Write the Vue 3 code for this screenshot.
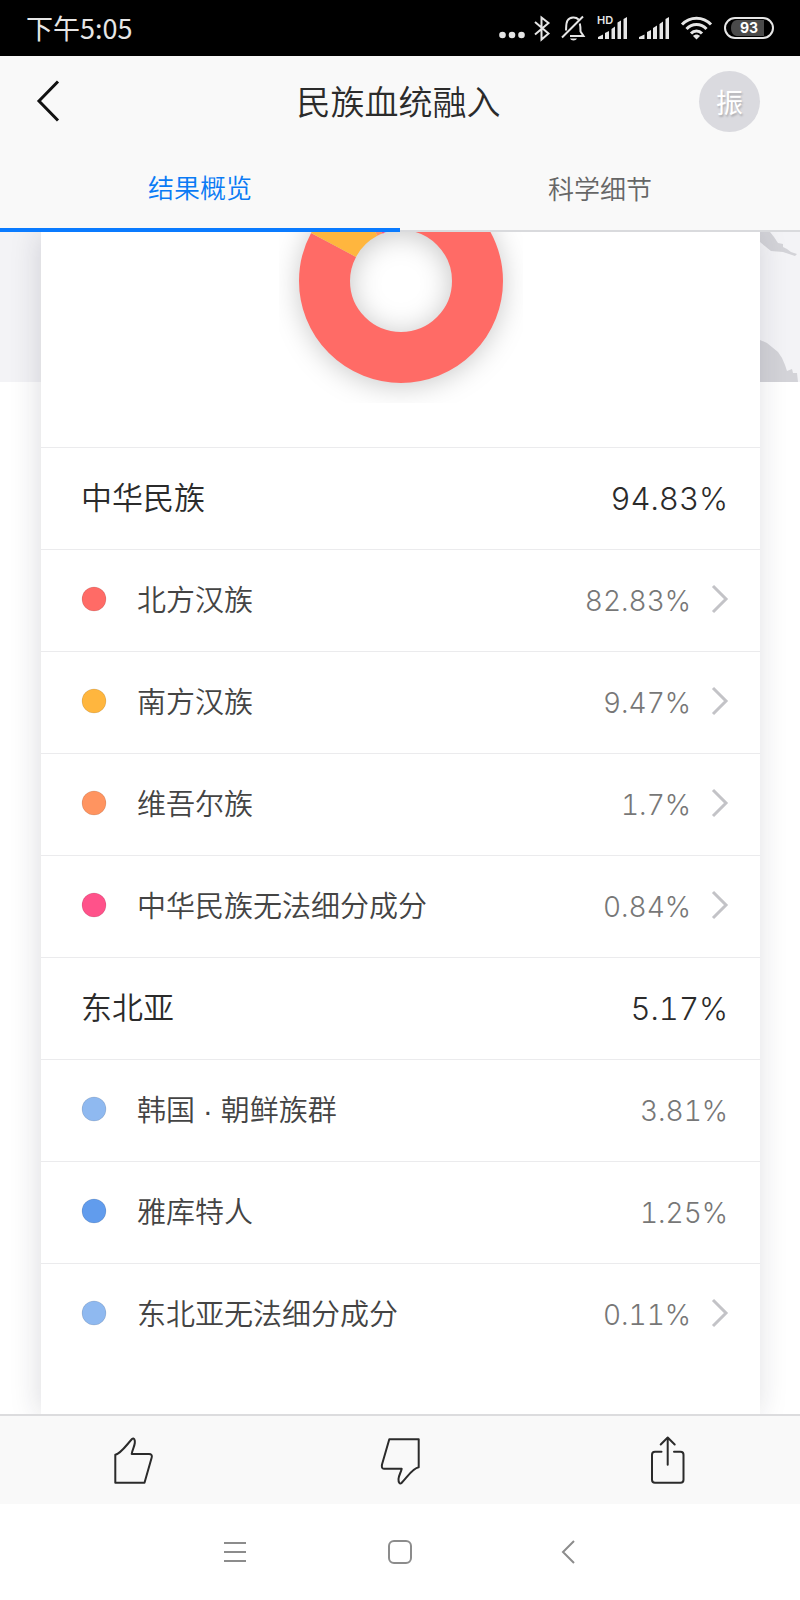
<script setup>
import { ref, computed } from 'vue'

const tabs = ['结果概览', '科学细节']
const activeTab = ref(0)

const groups = [
  {
    name: '中华民族',
    value: 94.83,
    items: [
      { name: '北方汉族', value: 82.83, color: '#ff6b66', detail: true },
      { name: '南方汉族', value: 9.47, color: '#ffb63e', detail: true },
      { name: '维吾尔族', value: 1.7, color: '#ff9460', detail: true },
      { name: '中华民族无法细分成分', value: 0.84, color: '#ff528a', detail: true }
    ]
  },
  {
    name: '东北亚',
    value: 5.17,
    items: [
      { name: '韩国 · 朝鲜族群', value: 3.81, color: '#8fb9f0', detail: false },
      { name: '雅库特人', value: 1.25, color: '#619ced', detail: false },
      { name: '东北亚无法细分成分', value: 0.11, color: '#8fb9f0', detail: true }
    ]
  }
]

// Each slice is a dash on a ring whose path length is normalised to 100.
const slices = computed(() => {
  let start = 0
  return groups.flatMap((g) => g.items).map((item) => {
    const slice = { color: item.color, dash: `${item.value} ${100 - item.value}`, offset: -start }
    start += item.value
    return slice
  })
})
</script>

<template>
  <div class="page">
    <div class="status">
      <span class="time">下午5:05</span>
      <div class="status-icons">
        <div class="status-pair">
          <svg width="26" height="26" viewBox="0 0 26 26" fill="#e6e6e6">
            <circle cx="3.5" cy="20" r="3.3" /><circle cx="13" cy="20" r="3.3" /><circle cx="22.5" cy="20" r="3.3" />
          </svg>
          <svg width="16" height="26" viewBox="0 0 16 26" fill="none" stroke="#e6e6e6" stroke-width="2">
            <path d="M2 7 L15.500 18.500 L8.500 24.500 V2.500 L15.500 8 L2 19.500" />
          </svg>
        </div>
        <svg width="24" height="26" viewBox="0 0 24 26" fill="none" stroke="#e6e6e6" stroke-width="2">
          <path d="M17.500 4.500 C15 1.800 9 1.800 6.500 5.500 C5 8 5.300 11 5 15.500 M9 21 H22.500 L19.500 16.500 C19.500 12 19.500 11 18.800 8.500 M22 1.500 L1 22.500" />
          <path d="M9 23.500 H16 C15 26 10 26 9 23.500 Z" fill="#e6e6e6" stroke="none" />
        </svg>
        <svg width="30" height="26" viewBox="0 0 30 26" fill="#e6e6e6">
          <text x="0" y="9" class="hd">HD</text>
          <path d="M1 24 V22 L6 19.500 V24 Z M8 24 V18 L12 16 V24 Z M14.500 24 V14 L18 11.500 V24 Z M20.500 24 V7.500 L24 5.500 V24 Z M26.500 24 V4 L30 2 V24 Z" />
        </svg>
        <svg width="30" height="26" viewBox="0 0 30 26" fill="#e6e6e6">
          <path d="M0 24 V22 L5.500 19.500 V24 Z M8 24 V17 L12 15 V24 Z M14 24 V13 L18 10.500 V24 Z M20.500 24 V9 L24 6.500 V24 Z M26.500 24 V4 L30 2 V24 Z" />
        </svg>
        <svg width="31" height="26" viewBox="0 0 31 26" fill="none" stroke="#e6e6e6" stroke-width="3">
          <path d="M1 9.500 C9 1 22 1 30 9.500 M5.500 14 C11 8 20 8 25.500 14 M10 18.500 C13 15.200 18 15.200 21 18.500" />
          <path d="M15.500 24.500 L12 21 C14 19 17 19 19 21 Z" fill="#e6e6e6" stroke="none" />
        </svg>
        <svg width="50" height="26" viewBox="0 0 50 26">
          <rect x="1" y="3" width="48" height="20" rx="10" fill="#000" stroke="#e6e6e6" stroke-width="2" />
          <path d="M13 5 H40 V21 H13 C5 21 5 5 13 5 Z" fill="#4a4a4a" />
          <text x="25" y="18" text-anchor="middle" class="battery">93</text>
        </svg>
      </div>
    </div>

    <header class="header">
      <button class="icon-button" aria-label="返回">
        <svg width="24" height="42" viewBox="0 0 24 42" fill="none" stroke="#111" stroke-width="3">
          <path d="M21 1.500 L2 21 L21 40.500" />
        </svg>
      </button>
      <h1>民族血统融入</h1>
      <button class="avatar">振</button>
    </header>

    <nav class="tabs">
      <button
        v-for="(tab, i) in tabs"
        :key="tab"
        :class="['tab', { active: activeTab === i }]"
        @click="activeTab = i"
      >{{ tab }}</button>
    </nav>

    <main class="content">
      <div class="backdrop">
        <svg width="40" height="150" viewBox="0 0 40 150" fill="#d3d3d8">
          <path d="M0 0 H10 L14 5 L18 11 L23 12 L23 15 L27 17 L31 20 L37 22 L35 24 L23 20 L11 19 L0 10 Z" />
          <path d="M0 108 L7 111 L18 120 L22 126 L25 133 L27 139 L32 137 L33 141 L37 141 L38 150 H0 Z" />
        </svg>
      </div>
      <section class="card">
        <div class="chart">
          <svg width="244" height="244" viewBox="-122 -122 244 244">
            <defs>
              <filter id="ring-shadow" x="-30%" y="-30%" width="160%" height="160%">
                <feGaussianBlur stdDeviation="14" />
              </filter>
            </defs>
            <circle r="76" cy="3" fill="none" stroke="#000" stroke-opacity="0.22" stroke-width="51" filter="url(#ring-shadow)" />
            <circle
              v-for="(s, i) in slices"
              :key="i"
              r="76.5"
              fill="none"
              stroke-width="51"
              pathLength="100"
              transform="rotate(-90)"
              :stroke="s.color"
              :stroke-dasharray="s.dash"
              :stroke-dashoffset="s.offset"
            />
          </svg>
        </div>
        <div v-for="g in groups" :key="g.name" class="group">
          <h2 class="row">
            <span class="name">{{ g.name }}</span>
            <span class="value">{{ g.value }}%</span>
          </h2>
          <component
            :is="item.detail ? 'button' : 'div'"
            v-for="item in g.items"
            :key="item.name"
            class="row item"
          >
            <svg class="dot" width="26" height="26" viewBox="0 0 26 26">
              <circle cx="13" cy="13" r="12" :fill="item.color" stroke="#000" stroke-opacity="0.1" />
            </svg>
            <span class="name">{{ item.name }}</span>
            <span class="value">{{ item.value }}%</span>
            <svg v-if="item.detail" class="chevron" width="16" height="28" viewBox="0 0 16 28" fill="none" stroke="#c3c3c7" stroke-width="3">
              <path d="M1 1 L14 14 L1 27" />
            </svg>
          </component>
        </div>
      </section>
    </main>

    <footer class="actions">
      <button class="action" aria-label="赞">
        <svg width="40" height="48" viewBox="0 0 40 48">
          <path d="M2.300 18.700 C8 17.500 13 9.500 19 3 C21 1.500 22.200 4 21.800 7 C21.300 11 19.500 13 18.700 18 H36 C38.500 18 39.300 19.500 38.700 21.500 L31.500 46.700 H2.300 Z" />
        </svg>
      </button>
      <button class="action" aria-label="踩">
        <svg width="40" height="48" viewBox="0 0 40 48">
          <path d="M38.700 31.300 C33 32 28 40 21.500 47 C20 48.500 18.300 46.500 18.500 43 C18.800 39 20.800 37 21.700 32.700 H4 C2 32.700 1.500 31 2 28.500 L9.300 3.300 H38.700 Z" />
        </svg>
      </button>
      <button class="action" aria-label="分享">
        <svg width="40" height="48" viewBox="0 0 40 48">
          <path d="M14.500 15.700 H8 Q5 15.700 5 18.700 V43.700 Q5 46.700 8 46.700 H33.500 Q36.500 46.700 36.500 43.700 V18.700 Q36.500 15.700 33.500 15.700 H27 M20.700 28.700 V1.500 M13.700 8.500 L20.700 1.500 L27.700 8.500" />
        </svg>
      </button>
    </footer>

    <nav class="system">
      <button aria-label="菜单">
        <svg width="24" height="24" viewBox="0 0 24 24"><path d="M2 3 H24 M2 12 H24 M2 21 H24" /></svg>
      </button>
      <button aria-label="主屏幕">
        <svg width="24" height="24" viewBox="0 0 24 24"><rect x="1" y="1" width="22" height="22" rx="5" /></svg>
      </button>
      <button aria-label="返回">
        <svg width="24" height="24" viewBox="0 0 24 24"><path d="M20 1 L9 12 L20 23" /></svg>
      </button>
    </nav>
  </div>
</template>

<style>
body {
  margin: 0;
  background: #fff;
}
</style>

<style scoped>
.page {
  display: flex;
  flex-direction: column;
  min-height: 100vh;
  font-family: "Noto Sans CJK SC", sans-serif;
  font-weight: 350;
  color: #2b2b2b;
}

button {
  padding: 0;
  border: 0;
  background: none;
  font: inherit;
  color: inherit;
  cursor: pointer;
}

svg {
  display: block;
  flex: none;
  overflow: visible;
}

.status {
  display: flex;
  align-items: center;
  justify-content: space-between;
  height: 56px;
  padding: 0 26px;
  background: #000;
  color: #e6e6e6;
}

.time {
  font-size: 27px;
  font-weight: 400;
  line-height: 40px;
}

.status-icons {
  display: flex;
  gap: 12px;
}

.status-pair {
  display: flex;
  gap: 8px;
}

.hd {
  font: 600 11px Inter, sans-serif;
}

.battery {
  font: 700 14px Inter, sans-serif;
  fill: #fff;
}

.header {
  display: grid;
  grid-template-columns: 61px 1fr 61px;
  align-items: center;
  height: 90px;
  padding: 0 40px 0 37px;
  background: #f9f9f9;
}

.icon-button {
  justify-self: start;
}

h1 {
  margin: 0;
  font-size: 34px;
  font-weight: inherit;
  line-height: 48px;
  text-align: center;
}

.avatar {
  height: 61px;
  border-radius: 50%;
  background: #dadadf;
  color: #fff;
  font-size: 27px;
  font-weight: 400;
  line-height: 61px;
  text-shadow: 1px 2px 2px rgba(0, 0, 0, 0.2);
}

.tabs {
  display: grid;
  grid-template-columns: 1fr 1fr;
  height: 86px;
  background: #f9f9f9;
}

.tab {
  box-sizing: border-box;
  border-bottom: 2px solid #d9dadd;
  font-size: 26px;
  line-height: 80px;
  color: #666;
}

.tab.active {
  border-bottom: 4px solid #0a7bff;
  color: #0a7bf5;
}

.content {
  display: grid;
  flex: 1;
  overflow: hidden;
}

.backdrop {
  grid-area: 1 / 1;
  align-self: start;
  display: flex;
  justify-content: flex-end;
  background: #f3f3f6;
}

.card {
  grid-area: 1 / 1;
  margin: 0 40px 0 41px;
  padding-bottom: 48px;
  background: #fff;
  box-shadow: -2px 0 28px rgba(30, 30, 50, 0.15);
}

.chart {
  display: flex;
  align-items: flex-end;
  justify-content: center;
  height: 171px;
  padding-bottom: 44px;
  overflow: hidden;
}

.chart svg {
  overflow: hidden;
}

.row {
  display: flex;
  align-items: center;
  box-sizing: border-box;
  width: 100%;
  height: 102px;
  margin: 0;
  padding: 0 32px 3px 40px;
  border-top: 1px solid #ebebed;
  font-size: 31px;
  font-weight: inherit;
  line-height: 44px;
  text-align: left;
}

.name {
  flex: 1;
  padding-top: 4px;
  font-family: "Liberation Sans", "Noto Sans CJK SC", sans-serif;
}

.value {
  padding-top: 4px;
  font-family: Inter, sans-serif;
  font-size: 31px;
  font-weight: 300;
  font-variant-numeric: tabular-nums;
}

.item {
  font-size: 29px;
  color: #444;
}

.item .value {
  font-size: 28px;
  color: #777;
}

.dot {
  margin-right: 30px;
}

.chevron {
  margin-left: 21px;
}

.actions {
  display: grid;
  grid-template-columns: repeat(3, 1fr);
  height: 88px;
  border-top: 2px solid #dcdcde;
  background: #f9f9f9;
}

.action {
  display: flex;
  align-items: center;
  justify-content: center;
}

.action path {
  fill: none;
  stroke: #2b2b2b;
  stroke-width: 2;
  stroke-linecap: round;
  stroke-linejoin: round;
}

.system {
  display: flex;
  align-items: center;
  justify-content: center;
  gap: 142px;
  height: 96px;
}

.system svg {
  fill: none;
  stroke: #8c8c8c;
  stroke-width: 2;
}
</style>
